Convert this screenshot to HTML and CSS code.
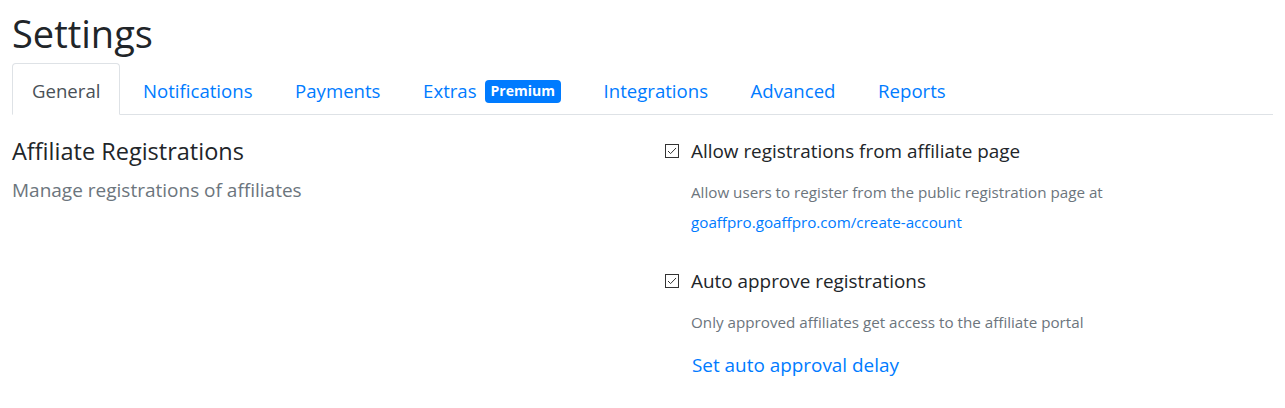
FILE: index.html
```html
<!DOCTYPE html>
<html>
<head>
<meta charset="utf-8">
<link rel="stylesheet" href="styles.css">
</head>
<body>
<div class="page">
  <h1 class="title">Settings</h1>
  <nav class="tabs">
    <a class="tab active">General</a>
    <a class="tab">Notifications</a>
    <a class="tab">Payments</a>
    <a class="tab">Extras <span class="badge">Premium</span></a>
    <a class="tab">Integrations</a>
    <a class="tab">Advanced</a>
    <a class="tab">Reports</a>
  </nav>
  <div class="row">
    <div class="col-left">
      <h2 class="section-title">Affiliate Registrations</h2>
      <p class="section-sub">Manage registrations of affiliates</p>
    </div>
    <div class="col-right">
      <div class="option">
        <label class="check"><span class="box"><svg width="12" height="12" viewBox="0 0 12 12"><path d="M2 6 L4.6 8.6 L10 3" fill="none" stroke="#333" stroke-width="1"/></svg></span>Allow registrations from affiliate page</label>
        <p class="help">Allow users to register from the public registration page at</p>
        <a class="help-link">goaffpro.goaffpro.com/create-account</a>
      </div>
      <div class="option">
        <label class="check"><span class="box"><svg width="12" height="12" viewBox="0 0 12 12"><path d="M2 6 L4.6 8.6 L10 3" fill="none" stroke="#333" stroke-width="1"/></svg></span>Auto approve registrations</label>
        <p class="help">Only approved affiliates get access to the affiliate portal</p>
        <a class="big-link">Set auto approval delay</a>
      </div>
    </div>
  </div>
</div>
</body>
</html>
```
FILE: styles.css
```css
* { box-sizing: border-box; }
body {
  margin: 0;
  font-family: "Open Sans", "Noto Sans", sans-serif;
  color: #212529;
  background: #fff;
}
.page { padding: 9px 12px 0 12px; }
.title {
  margin: 0;
  font-size: 38px;
  font-weight: 400;
  line-height: 48px;
  height: 54px;
}
.tabs {
  display: flex;
  border-bottom: 1px solid #dee2e6;
  height: 52px;
}
.tab {
  display: flex;
  align-items: center;
  padding: 2px 19px 0;
  font-size: 18.6px;
  color: #007bff;
  border: 1px solid transparent;
  border-top-left-radius: 4px;
  border-top-right-radius: 4px;
  margin-bottom: -1px;
  margin-right: 2.6px;
}
.tab.active {
  color: #495057;
  background: #fff;
  border-color: #dee2e6 #dee2e6 #fff;
}
.badge {
  display: inline-block;
  background: #007bff;
  color: #fff;
  font-size: 14px;
  font-weight: 700;
  line-height: 1;
  padding: 4px 6px 5px;
  border-radius: 4px;
  margin-left: 8px;
  margin-top: 2px;
}
.row { display: flex; padding-top: 22px; }
.col-left { width: 641px; }
.col-right { flex: 1; padding-left: 12px; }
.section-title {
  margin: 0;
  font-size: 23.5px;
  font-weight: 400;
  line-height: 28px;
}
.section-sub {
  margin: 12px 0 0;
  font-size: 19px;
  color: #6c757d;
  line-height: 26px;
}
.option { display: flex; flex-direction: column; align-items: flex-start; margin-bottom: 35px; }
.check {
  display: flex;
  align-items: center;
  font-size: 18.9px;
  line-height: 28px;
}
.box {
  width: 14px; height: 14px;
  border: 1px solid #333;
  display: inline-flex; align-items: center; justify-content: center;
  margin-right: 12px;
  background: #fff;
}
.help {
  margin: 17px 0 0 26px;
  font-size: 15.2px;
  line-height: 20px;
  color: #6c757d;
}
.help-link {
  margin: 10px 0 0 26px;
  font-size: 15.2px;
  line-height: 20px;
  color: #007bff;
}
.big-link {
  margin: 19px 0 0 27px;
  font-size: 18.9px;
  line-height: 28px;
  color: #007bff;
}
```
